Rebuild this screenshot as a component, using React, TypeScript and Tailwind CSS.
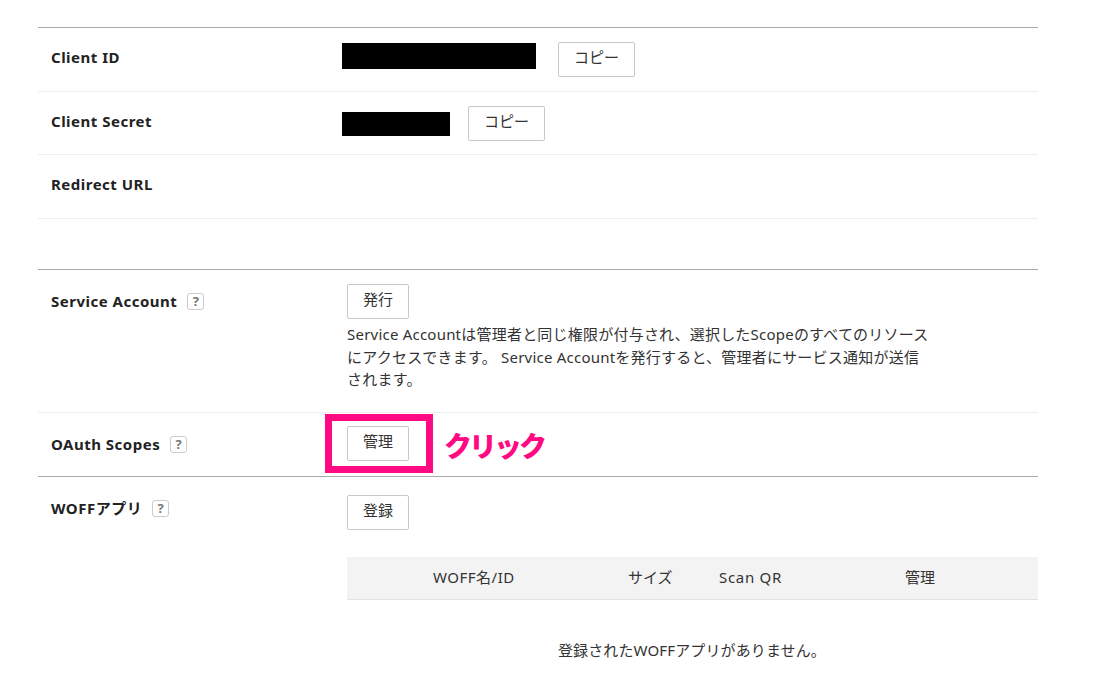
import React from 'react';

const Btn: React.FC<{ label: string; className?: string }> = ({ label, className = '' }) => (
  <button
    type="button"
    className={`h-[35px] bg-white border border-[#c8c8c8] rounded-[2px] text-[15px] text-[#333] leading-[29px] pb-[4px] ${className}`}
  >
    {label}
  </button>
);

const Help = () => (
  <span className="inline-flex w-[17px] h-[17px] ml-[10px] items-center justify-center border border-[#ccc] rounded-[3px] text-[13px] font-bold tracking-normal text-[#777] leading-none">
    ?
  </span>
);

const Row: React.FC<{ label: React.ReactNode; className?: string; children?: React.ReactNode }> = ({
  label,
  className = '',
  children,
}) => (
  <div className={`flex ${className}`}>
    <div className="w-[309px] shrink-0 pl-[13px] flex items-start font-bold text-[#222] tracking-[0.5px]">{label}</div>
    <div className="flex-1 min-w-0">{children}</div>
  </div>
);

export default function App() {
  return (
    <div
      className="relative h-[687px] overflow-hidden bg-white text-[15px] text-[#333]"
      style={{ fontFamily: '"Noto Sans", "Noto Sans CJK JP", sans-serif' }}
    >
      <div className="w-[1000px] ml-[38px] pt-[27px]">
        {/* Client info */}
        <div className="border-t border-[#aaa]">
          <Row label={<span className="pt-[18px]">Client ID</span>} className="h-[64px] border-b border-[#eee]">
            <div className="flex items-start pt-[14px] -ml-[5px]">
              <div className="w-[194px] h-[26px] mt-[1px] bg-black" />
              <Btn label="コピー" className="w-[77px] ml-[22px]" />
            </div>
          </Row>
          <Row label={<span className="pt-[18px]">Client Secret</span>} className="h-[63px] border-b border-[#eee]">
            <div className="flex items-center pt-[14px] -ml-[5px]">
              <div className="w-[108px] h-[24px] bg-black" />
              <Btn label="コピー" className="w-[77px] ml-[18px]" />
            </div>
          </Row>
          <Row label={<span className="pt-[18px]">Redirect URL</span>} className="h-[64px] border-b border-[#eee]" />
        </div>

        {/* Service account */}
        <div className="mt-[50px] border-t border-[#aaa]">
          <Row
            label={
              <span className="pt-[20px] flex items-center">
                Service Account
                <Help />
              </span>
            }
            className="h-[143px] border-b border-[#eee]"
          >
            <div className="pt-[14px]">
              <Btn label="発行" className="block w-[62px]" />
              <p className="mt-[4px] w-[585px] leading-[22.5px] tracking-[0.22px]">
                Service Accountは管理者と同じ権限が付与され、選択したScopeのすべてのリソースにアクセスできます。 Service Accountを発行すると、管理者にサービス通知が送信されます。
              </p>
            </div>
          </Row>
          <Row
            label={
              <span className="pt-[20px] flex items-center">
                OAuth Scopes
                <Help />
              </span>
            }
            className="h-[64px] border-b border-[#aaa]"
          >
            <div className="pt-[13px]">
              <Btn label="管理" className="block w-[62px]" />
            </div>
          </Row>
          <Row
            label={
              <span className="pt-[20px] flex items-center">
                WOFFアプリ
                <Help />
              </span>
            }
          >
            <div className="pt-[18px]">
              <Btn label="登録" className="block w-[62px]" />
              <div className="mt-[27px] h-[43px] flex items-center bg-[#f3f3f3] border-b border-[#e2e2e2] pb-[2px]">
                <span className="w-[254px] pl-[86px] tracking-[0.5px]">WOFF名/ID</span>
                <span className="w-[118px] pl-[27px]">サイズ</span>
                <span className="w-[186px] tracking-[0.7px]">Scan QR</span>
                <span>管理</span>
              </div>
              <p className="mt-[39px] pl-[211px] tracking-[0.12px]">登録されたWOFFアプリがありません。</p>
            </div>
          </Row>
        </div>
      </div>

      {/* annotation over the page */}
      <div className="absolute left-[325px] top-[414px] w-[108px] h-[59px] border-[7px] border-[#ff0a82]" />
      <span className="absolute left-[444px] top-[426px] text-[28px] leading-[40px] font-black text-[#ff0a82] tracking-[-3px]">
        クリック
      </span>
    </div>
  );
}
